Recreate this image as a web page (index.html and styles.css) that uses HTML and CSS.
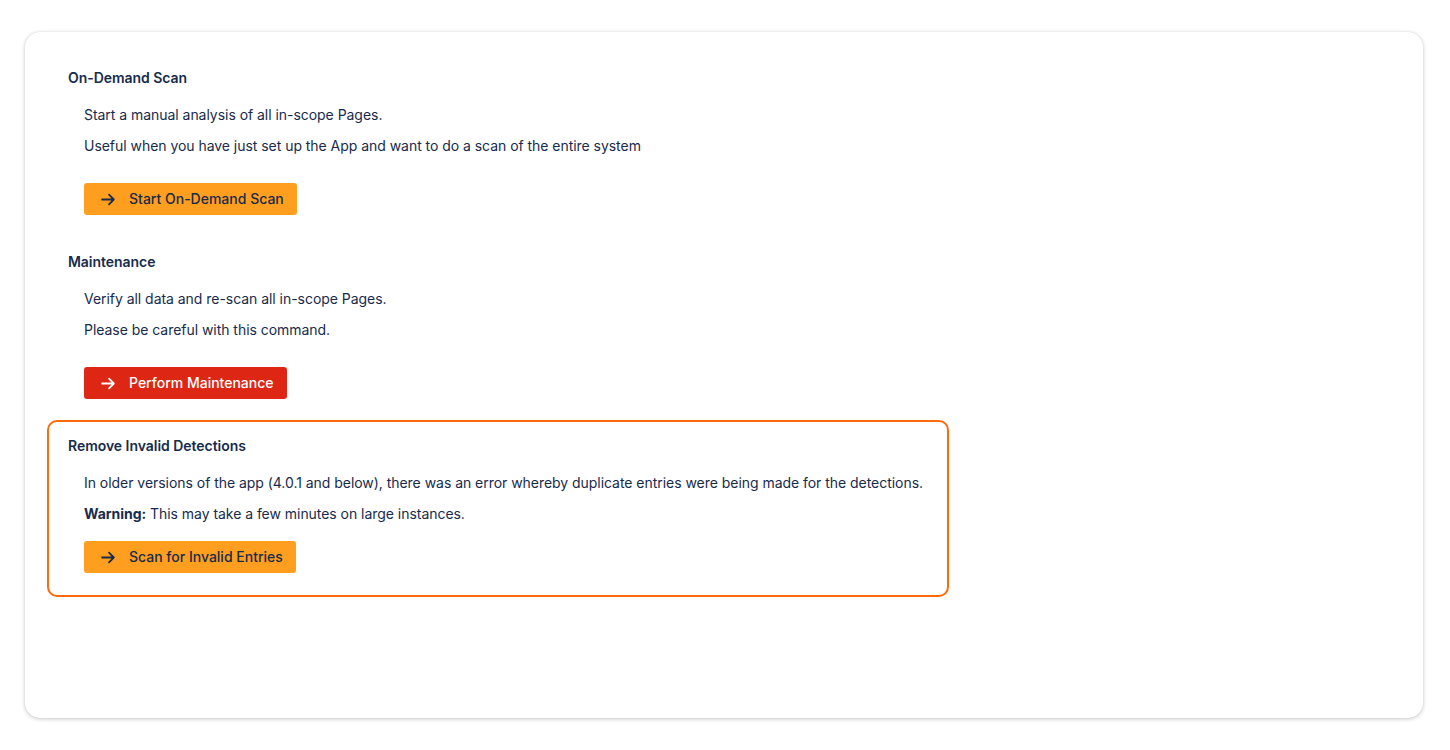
FILE: index.html
```html
<!DOCTYPE html>
<html lang="en">
<head>
<meta charset="utf-8">
<title>Scan settings</title>
<link rel="stylesheet" href="styles.css">
</head>
<body>
<div class="card">
  <section class="section section--tight">
    <h2 class="section-title">On-Demand Scan</h2>
    <p class="para">Start a manual analysis of all in-scope Pages.</p>
    <p class="para">Useful when you have just set up the App and want to do a scan of the entire system</p>
    <div class="actions actions--spaced">
      <button class="btn btn--warning" type="button">
        <svg class="btn-icon" viewBox="0 0 16 16" aria-hidden="true"><path d="M2 8h11M8.5 3.5L13 8l-4.5 4.5" fill="none" stroke="currentColor" stroke-width="1.7" stroke-linecap="round" stroke-linejoin="round"/></svg>
        <span>Start On-Demand Scan</span>
      </button>
    </div>
  </section>
  <section class="section section--tight">
    <h2 class="section-title">Maintenance</h2>
    <p class="para">Verify all data and re-scan all in-scope Pages.</p>
    <p class="para">Please be careful with this command.</p>
    <div class="actions actions--spaced">
      <button class="btn btn--danger" type="button">
        <svg class="btn-icon" viewBox="0 0 16 16" aria-hidden="true"><path d="M2 8h11M8.5 3.5L13 8l-4.5 4.5" fill="none" stroke="currentColor" stroke-width="1.7" stroke-linecap="round" stroke-linejoin="round"/></svg>
        <span>Perform Maintenance</span>
      </button>
    </div>
  </section>
  <section class="section section--highlight">
    <h2 class="section-title">Remove Invalid Detections</h2>
    <p class="para">In older versions of the app (4.0.1 and below), there was an error whereby duplicate entries were being made for the detections.</p>
    <p class="para"><strong>Warning:</strong> This may take a few minutes on large instances.</p>
    <div class="actions">
      <button class="btn btn--warning" type="button">
        <svg class="btn-icon" viewBox="0 0 16 16" aria-hidden="true"><path d="M2 8h11M8.5 3.5L13 8l-4.5 4.5" fill="none" stroke="currentColor" stroke-width="1.7" stroke-linecap="round" stroke-linejoin="round"/></svg>
        <span>Scan for Invalid Entries</span>
      </button>
    </div>
  </section>
</div>
</body>
</html>
```
FILE: styles.css
```css
* { box-sizing: border-box; }

html, body {
  margin: 0;
  background: #ffffff;
}

body {
  padding: 32px 27px 32px 25px;
  font-family: Inter, "Noto Sans", "Liberation Sans", sans-serif;
  font-size: 14px;
  line-height: 20px;
  color: #172b4d;
  letter-spacing: -0.04px;
}

.card {
  height: 686px;
  background: #ffffff;
  border-radius: 15px;
  box-shadow: 0 1px 4px rgba(0, 0, 0, 0.22), 0 0 1px rgba(0, 0, 0, 0.12);
  padding: 20px 22px;
}

.section {
  width: 902px;
  border: 2px solid transparent;
  border-radius: 10px;
  padding: 14px 19px 22px;
}

.section--tight {
  padding-bottom: 19px;
}

.section--highlight {
  border-color: #ff6a0a;
}

.section-title {
  margin: 0 0 17px;
  font-size: 14px;
  line-height: 20px;
  font-weight: 600;
}

.para {
  margin: 0 0 11px 16px;
  white-space: nowrap;
}

.para strong {
  font-weight: 700;
}

.actions {
  margin: 17px 0 0 16px;
  display: flex;
}

.actions--spaced {
  margin-top: 27px;
}

.btn {
  display: inline-flex;
  align-items: center;
  gap: 12px;
  height: 32px;
  padding: 0 13px 0 16px;
  border: none;
  border-radius: 3px;
  font-family: inherit;
  font-size: 14px;
  font-weight: 500;
  line-height: 20px;
  letter-spacing: 0;
  cursor: pointer;
}

.btn--warning {
  background: #ff9e1f;
  color: #172b4d;
}

.btn--danger {
  background: #de2614;
  color: #ffffff;
}

.btn-icon {
  width: 17px;
  height: 17px;
  flex: none;
}
```
